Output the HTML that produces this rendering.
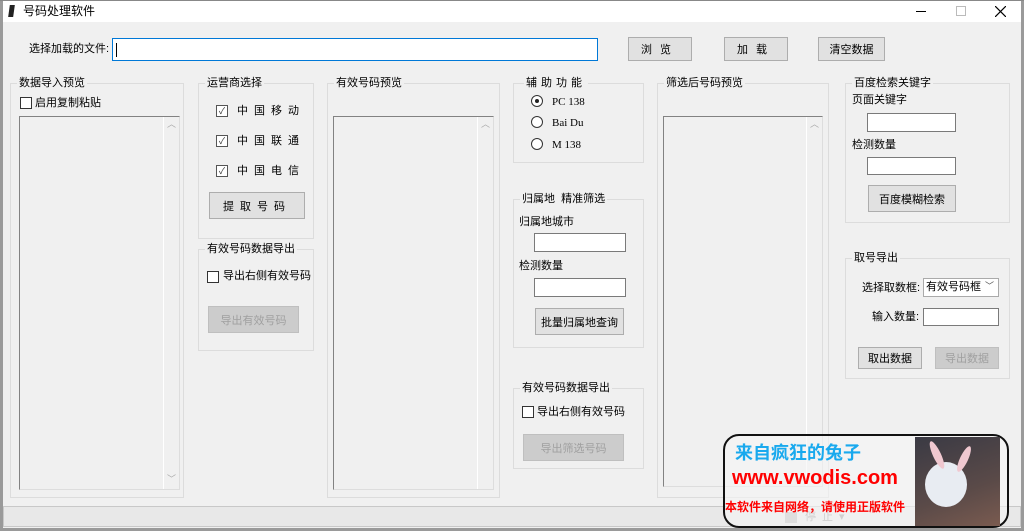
<!DOCTYPE html><html><head><meta charset="utf-8"><style>
*{box-sizing:border-box;margin:0;padding:0}
body{width:1024px;height:531px;background:#f0f0f0;position:relative;overflow:hidden;font-family:"Liberation Sans","Noto Sans CJK SC",sans-serif;font-size:11px;color:#000}
.a{position:absolute}
.g{position:absolute;border:1px solid #dcdcdc}
.gt{position:absolute;background:#f0f0f0;padding:0 2px;top:-8px;left:6px;font-size:11px;line-height:14px;white-space:nowrap}
.btn{position:absolute;background:#e1e1e1;border:1px solid #adadad;text-align:center;font-size:11px;display:flex;align-items:center;justify-content:center}
.dis{color:#a0a0a0;background:#cccccc;border-color:#bfbfbf}
.in{position:absolute;background:#fff;border:1px solid #7a7a7a}
.ta{position:absolute;background:#f0f0f0;border:1px solid #828282;border-right-color:#ddd;border-bottom-color:#ddd}
.sb{position:absolute;right:0;top:0;bottom:0;width:16px;background:#f0f0f0;border-left:1px solid #fff;color:#aaa;font-size:9px;text-align:center}
.cb{position:absolute;width:12px;height:12px;border:1px solid #333;background:#fff}
.ck{position:absolute;width:12px;height:12px;border:1px solid #555;background:#fff;font-size:9px;line-height:10px;text-align:center;color:#333}
.rd{position:absolute;width:12px;height:12px;border:1px solid #333;border-radius:50%;background:#fff}
.t{position:absolute;white-space:nowrap;line-height:14px}
.sp{letter-spacing:6px}
</style></head><body>
<div class="a" style="left:0;top:0;width:1024px;height:22px;background:#fff"></div>
<div class="a" style="left:0;top:0;width:3px;height:531px;background:#9a9a9a"></div>
<div class="a" style="left:1021px;top:0;width:3px;height:531px;background:#9a9a9a"></div>
<div class="a" style="left:0;top:0;width:1024px;height:1px;background:#888"></div>
<div class="a" style="left:0;top:528px;width:1024px;height:3px;background:#9a9a9a"></div>
<div class="a" style="left:9px;top:5px;width:5px;height:12px;background:#222;transform:skewX(-8deg)"></div>
<div class="t" style="left:23px;top:4px;font-size:12px">号码处理软件</div>
<div class="a" style="left:916px;top:11px;width:10px;height:1px;background:#000"></div>
<div class="a" style="left:956px;top:6px;width:10px;height:10px;border:1px solid #bbb"></div>
<svg class="a" style="left:995px;top:6px" width="11" height="11"><path d="M0 0L11 11M11 0L0 11" stroke="#000" stroke-width="1.2"/></svg>

<div class="t" style="left:29px;top:42px">选择加载的文件:</div>
<div class="in" style="left:112px;top:38px;width:486px;height:23px;border-color:#0078d7"><div class="a" style="left:3px;top:4px;width:1px;height:14px;background:#000"></div></div>
<div class="btn" style="left:628px;top:37px;width:64px;height:24px;letter-spacing:8px">浏览</div>
<div class="btn" style="left:724px;top:37px;width:64px;height:24px;letter-spacing:8px">加载</div>
<div class="btn" style="left:818px;top:37px;width:67px;height:24px">清空数据</div>

<div class="g" style="left:10px;top:83px;width:174px;height:415px"><div class="gt">数据导入预览</div></div>
<div class="cb" style="left:20px;top:97px"></div><div class="t" style="left:35px;top:96px">启用复制粘贴</div>
<div class="ta" style="left:19px;top:116px;width:161px;height:374px"><div class="sb">︿<div style="position:absolute;bottom:4px;width:100%">﹀</div></div></div>

<div class="g" style="left:198px;top:83px;width:116px;height:156px"><div class="gt">运营商选择</div></div>
<div class="ck" style="left:216px;top:105px">✓</div><div class="t sp" style="left:237px;top:104px">中国移动</div>
<div class="ck" style="left:216px;top:135px">✓</div><div class="t sp" style="left:237px;top:134px">中国联通</div>
<div class="ck" style="left:216px;top:165px">✓</div><div class="t sp" style="left:237px;top:164px">中国电信</div>
<div class="btn" style="left:209px;top:192px;width:96px;height:27px;letter-spacing:6px">提取号码</div>

<div class="g" style="left:198px;top:249px;width:116px;height:102px"><div class="gt">有效号码数据导出</div></div>
<div class="cb" style="left:207px;top:271px"></div><div class="t" style="left:223px;top:269px">导出右侧有效号码</div>
<div class="btn dis" style="left:208px;top:306px;width:91px;height:27px">导出有效号码</div>

<div class="g" style="left:327px;top:83px;width:173px;height:415px"><div class="gt">有效号码预览</div></div>
<div class="ta" style="left:333px;top:116px;width:161px;height:374px"><div class="sb">︿</div></div>

<div class="g" style="left:513px;top:83px;width:131px;height:80px"><div class="gt" style="left:10px;letter-spacing:4px">辅助功能</div></div>
<div class="rd" style="left:531px;top:95px"><div class="a" style="left:3px;top:3px;width:4px;height:4px;border-radius:50%;background:#222"></div></div><div class="t" style="left:552px;top:95px;font-family:'Liberation Serif',serif;font-size:11px">PC 138</div>
<div class="rd" style="left:531px;top:116px"></div><div class="t" style="left:552px;top:116px;font-family:'Liberation Serif',serif;font-size:11px">Bai Du</div>
<div class="rd" style="left:531px;top:138px"></div><div class="t" style="left:552px;top:138px;font-family:'Liberation Serif',serif;font-size:11px">M 138</div>

<div class="g" style="left:513px;top:199px;width:131px;height:149px"><div class="gt">归属地&nbsp;&nbsp;精准筛选</div></div>
<div class="t" style="left:519px;top:215px">归属地城市</div>
<div class="in" style="left:534px;top:233px;width:92px;height:19px"></div>
<div class="t" style="left:519px;top:259px">检测数量</div>
<div class="in" style="left:534px;top:278px;width:92px;height:19px"></div>
<div class="btn" style="left:535px;top:308px;width:89px;height:27px">批量归属地查询</div>

<div class="g" style="left:513px;top:388px;width:131px;height:81px"><div class="gt">有效号码数据导出</div></div>
<div class="cb" style="left:522px;top:406px"></div><div class="t" style="left:537px;top:405px">导出右侧有效号码</div>
<div class="btn dis" style="left:523px;top:434px;width:101px;height:27px">导出筛选号码</div>

<div class="g" style="left:657px;top:83px;width:172px;height:415px"><div class="gt">筛选后号码预览</div></div>
<div class="ta" style="left:663px;top:116px;width:160px;height:371px"><div class="sb">︿</div></div>

<div class="g" style="left:845px;top:83px;width:165px;height:140px"><div class="gt">百度检索关键字</div></div>
<div class="t" style="left:852px;top:93px">页面关键字</div>
<div class="in" style="left:867px;top:113px;width:89px;height:19px"></div>
<div class="t" style="left:852px;top:138px">检测数量</div>
<div class="in" style="left:867px;top:157px;width:89px;height:18px"></div>
<div class="btn" style="left:868px;top:185px;width:88px;height:27px">百度模糊检索</div>

<div class="g" style="left:845px;top:258px;width:165px;height:121px"><div class="gt">取号导出</div></div>
<div class="t" style="left:862px;top:281px">选择取数框:</div>
<div class="in" style="left:923px;top:278px;width:76px;height:19px;border-color:#aaa;padding:1px 2px;line-height:15px">有效号码框<span style="position:absolute;right:4px;top:0;color:#555;font-size:9px">﹀</span></div>
<div class="t" style="left:872px;top:310px">输入数量:</div>
<div class="in" style="left:923px;top:308px;width:76px;height:18px"></div>
<div class="btn" style="left:858px;top:347px;width:64px;height:22px">取出数据</div>
<div class="btn dis" style="left:935px;top:347px;width:64px;height:22px">导出数据</div>

<div class="a" style="left:3px;top:506px;width:1018px;height:21px;background:#e8e8e8;border:1px solid #c8c8c8"></div>
<div class="a" style="left:785px;top:512px;width:12px;height:11px;background:#bbb"></div>
<div class="t" style="left:805px;top:510px;color:#999;letter-spacing:6px">停止▾</div>

<div class="a" style="left:723px;top:434px;width:286px;height:94px;border:2px solid #111;border-radius:16px;background:rgba(245,245,245,0.6)"></div>
<div class="t" style="left:735px;top:443px;font-size:18px;line-height:20px;font-weight:bold;color:#19a9ee">来自疯狂的兔子</div>
<div class="t" style="left:732px;top:467px;font-size:20px;line-height:22px;font-weight:bold;color:#ff0000">www.vwodis.com</div>
<div class="t" style="left:725px;top:500px;font-size:12px;font-weight:bold;color:#ff0000">本软件来自网络，请使用正版软件</div>
<div class="a" style="left:915px;top:437px;width:85px;height:89px;background:linear-gradient(160deg,#3a3a44,#5a4a48 60%,#7a5b50)"></div>
<div class="a" style="left:925px;top:462px;width:42px;height:45px;border-radius:50%;background:#e8ecf2"></div>
<div class="a" style="left:933px;top:440px;width:8px;height:30px;border-radius:50%;background:#f0c8d0;transform:rotate(-25deg)"></div>
<div class="a" style="left:960px;top:445px;width:8px;height:28px;border-radius:50%;background:#f0c8d0;transform:rotate(25deg)"></div>
</body></html>
